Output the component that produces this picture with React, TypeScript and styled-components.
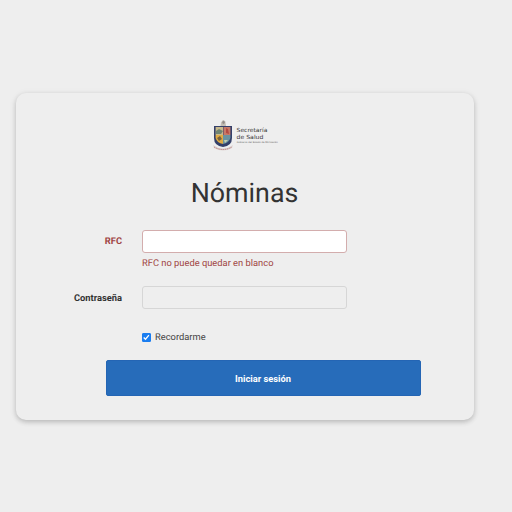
import React from "react";
import styled, { createGlobalStyle } from "styled-components";

const GlobalStyle = createGlobalStyle`
  * { box-sizing: border-box; }
  body {
    margin: 0;
    background: #eee;
    color: #333;
    font-family: Roboto, sans-serif;
    font-size: 9.33px;
    line-height: 13px;
    text-rendering: geometricPrecision;
  }
`;

const Page = styled.main`
  height: 512px;
  padding: 93px 38px 0 16px;
  overflow: hidden;
`;

const Card = styled.section`
  height: 327px;
  padding-top: 26px;
  border-radius: 10px;
  background: #eee;
  box-shadow: 0 2px 5px rgba(0, 0, 0, 0.2), 0 1px 8px rgba(0, 0, 0, 0.05);
`;

const Logo = styled.svg`
  display: block;
  width: 68px;
  height: 34px;
  margin-left: 196px;
`;

const Title = styled.h1`
  margin: 22px 1px 0 0;
  height: 36px;
  font-size: 26.8px;
  font-weight: 400;
  line-height: 36px;
  text-align: center;
`;

const Form = styled.form`
  display: flex;
  flex-direction: column;
  padding-top: 19px;
`;

const Field = styled.div`
  display: grid;
  grid-template-columns: 106px 205px;
  column-gap: 20px;
  height: 56px;
`;

const Label = styled.label<{ $invalid?: boolean }>`
  padding-top: ${(p) => (p.$invalid ? "5px" : "6px")};
  font-weight: 700;
  text-align: right;
  color: ${(p) => (p.$invalid ? "#a04543" : "#333")};
`;

const Input = styled.input<{ $invalid?: boolean }>`
  display: block;
  width: 205px;
  height: 23px;
  padding: 4px 8px;
  border: 1px solid ${(p) => (p.$invalid ? "#d3adad" : "#d6d6d6")};
  border-radius: 3px;
  outline: none;
  background: ${(p) => (p.$invalid ? "#fff" : "#eee")};
  font: inherit;
`;

const ErrorText = styled.div`
  margin-top: 4px;
  color: #a04543;
`;

const Remember = styled.label`
  display: flex;
  align-items: center;
  height: 13px;
  margin: -11px 0 0 126px;
  gap: 4.5px;
  color: #444;
`;

const Checkbox = styled.span`
  display: grid;
  width: 8.5px;
  height: 8.5px;
  margin-top: -0.5px;

  input {
    grid-area: 1 / 1;
    appearance: none;
    width: 8.5px;
    height: 8.5px;
    margin: 0;
    border: 1px solid #767676;
    border-radius: 1px;
    background: #fff;
  }

  input:checked {
    border-color: #1a7df0;
    background: #1a7df0;
  }

  svg {
    grid-area: 1 / 1;
    visibility: hidden;
    pointer-events: none;
    z-index: 1;
  }

  input:checked + svg {
    visibility: visible;
  }
`;

const Submit = styled.button`
  width: 315px;
  height: 36px;
  margin: 16px 0 0 90px;
  padding: 0 1px 0 0;
  border: 1px solid #2465b4;
  border-radius: 2px;
  background: #276cba;
  color: #fff;
  font: 700 9.33px/13px Roboto, sans-serif;
`;

const HealthLogo = () => (
  <Logo viewBox="0 0 68 34" aria-label="Secretaría de Salud">
    <path d="M8.5 7 9 3.5 11 1l2.3 1.2L14 7Z" fill="#c3bdb4" />
    <path d="m10 3 2-1.4 1 2.4-2 1.2Z" fill="#938d89" />
    <path d="M2 7h18v12q0 8-9 9-9-1-9-9Z" fill="#34406a" />
    <path d="M3.6 8H11v8H3.6Z" fill="#c8b98c" />
    <path d="M11.5 8h6.9v8h-6.9Z" fill="#c87967" />
    <path d="m14 9 2 1 1 5-3-1Z" fill="#b44942" />
    <path d="M3.6 16H11v9q-6-1-7.4-6Z" fill="#dfaa43" />
    <path d="M11 16h7.4v3q-1.4 5-7.4 6Z" fill="#6b93a0" />
    <path d="m4 12 3-2 4 2-2 3H4Z" fill="#6f8472" />
    <path d="m5 19 3-2 2 3-3 2Z" fill="#79623e" />
    <path d="M12 21h4l-3 3Z" fill="#c5cfb0" />
    <path d="M1 26q10 7 20 0l-1 3q-9 5-18 0Z" fill="#ddd4d3" />
    <path d="M2 28q9 5 18 0" fill="none" stroke="#b26b6b" strokeWidth=".8" strokeDasharray="1.2 .7" />
    <g fill="#333" fontFamily="DejaVu Sans, sans-serif" fontSize="5.6">
      <text x="24.6" y="12.8" textLength="30.8" lengthAdjust="spacingAndGlyphs">Secretaría</text>
      <text x="24.6" y="19.5" textLength="26.8" lengthAdjust="spacingAndGlyphs">de Salud</text>
      <text x="24.8" y="24.2" fontSize="2.4" fill="#666" textLength="41">Gobierno del Estado de Michoacán</text>
    </g>
  </Logo>
);

export default function App() {
  return (
    <Page>
      <GlobalStyle />
      <Card>
        <HealthLogo />
        <Title>Nóminas</Title>
        <Form noValidate>
          <Field>
            <Label $invalid htmlFor="rfc">RFC</Label>
            <div>
              <Input $invalid id="rfc" />
              <ErrorText>RFC no puede quedar en blanco</ErrorText>
            </div>
          </Field>
          <Field>
            <Label htmlFor="password">Contraseña</Label>
            <Input id="password" type="password" />
          </Field>
          <Remember>
            <Checkbox>
              <input type="checkbox" defaultChecked />
              <svg width="8.5" height="8.5" viewBox="0 0 8 8" aria-hidden="true">
                <path d="m1.6 4.2 1.7 1.7L6.5 2" fill="none" stroke="#fff" strokeWidth="1.2" />
              </svg>
            </Checkbox>
            Recordarme
          </Remember>
          <Submit type="button">Iniciar sesión</Submit>
        </Form>
      </Card>
    </Page>
  );
}
